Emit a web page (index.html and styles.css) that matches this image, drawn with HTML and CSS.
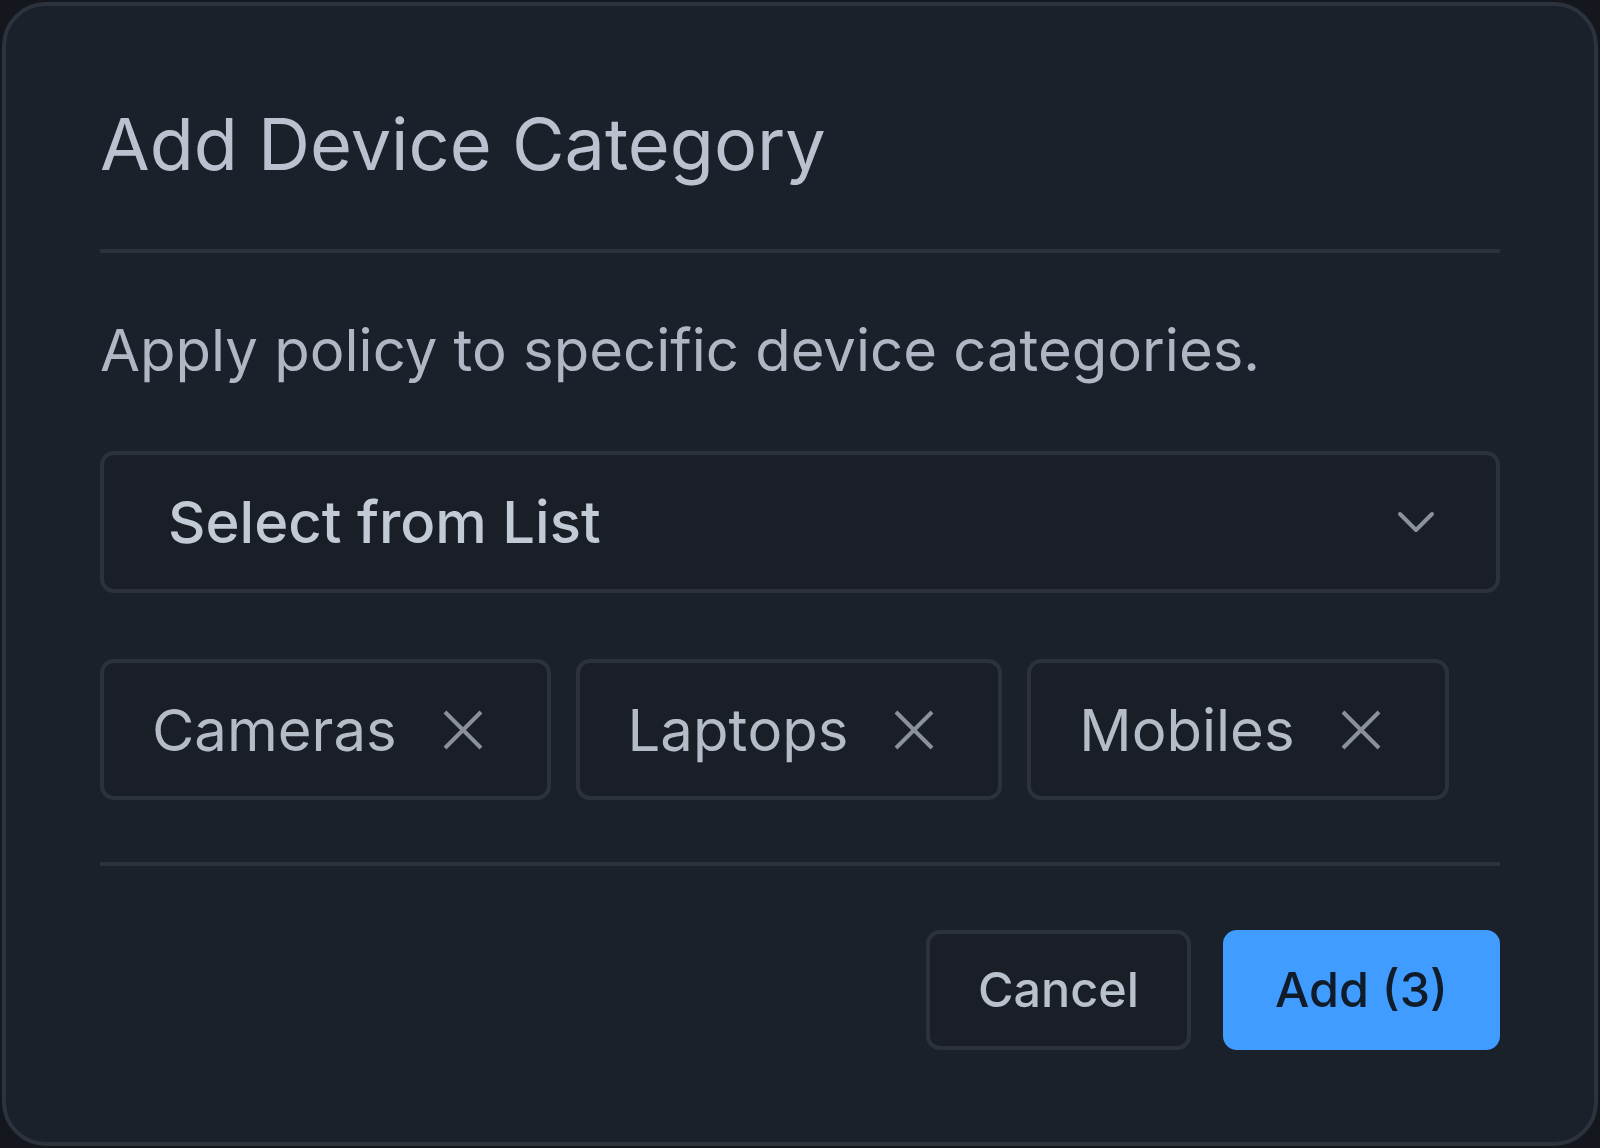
FILE: index.html
```html
<!DOCTYPE html>
<html lang="en">
<head>
<meta charset="utf-8">
<title>Add Device Category</title>
<link rel="stylesheet" href="styles.css">
</head>
<body>
<div class="modal">
  <header class="modal-header">
    <h1 class="modal-title">Add Device Category</h1>
  </header>
  <section class="modal-body">
    <p class="modal-desc">Apply policy to specific device categories.</p>
    <div class="select">
      <span class="select-label">Select from List</span>
      <svg class="chevron" width="40" height="24" viewBox="0 0 40 24" aria-hidden="true">
        <polyline points="4,4 20,20 36,4" fill="none" stroke="currentColor" stroke-width="4" stroke-linecap="round" stroke-linejoin="round"/>
      </svg>
    </div>
    <div class="tags">
      <div class="tag">
        <span class="tag-label">Cameras</span>
        <svg class="tag-x" width="40" height="40" viewBox="0 0 40 40" aria-hidden="true">
          <path d="M2 2 L38 38 M38 2 L2 38" stroke="currentColor" stroke-width="4" fill="none"/>
        </svg>
      </div>
      <div class="tag">
        <span class="tag-label">Laptops</span>
        <svg class="tag-x" width="40" height="40" viewBox="0 0 40 40" aria-hidden="true">
          <path d="M2 2 L38 38 M38 2 L2 38" stroke="currentColor" stroke-width="4" fill="none"/>
        </svg>
      </div>
      <div class="tag">
        <span class="tag-label">Mobiles</span>
        <svg class="tag-x" width="40" height="40" viewBox="0 0 40 40" aria-hidden="true">
          <path d="M2 2 L38 38 M38 2 L2 38" stroke="currentColor" stroke-width="4" fill="none"/>
        </svg>
      </div>
    </div>
  </section>
  <footer class="modal-footer">
    <button class="btn btn-secondary" type="button">Cancel</button>
    <button class="btn btn-primary" type="button">Add (3)</button>
  </footer>
</div>
</body>
</html>
```

FILE: styles.css
```css
* {
  box-sizing: border-box;
}

html, body {
  margin: 0;
  padding: 0;
}

body {
  width: 1600px;
  height: 1148px;
  background: #14181e;
  font-family: Inter, "Noto Sans", "Liberation Sans", sans-serif;
  padding: 2px;
  overflow: hidden;
}

.modal {
  width: 1596px;
  height: 1144px;
  background: #1b212a;
  border: 4px solid #2c333d;
  border-radius: 44px;
  padding: 94px 94px 92px;
  display: flex;
  flex-direction: column;
}

.modal-header {
  padding-bottom: 61px;
  border-bottom: 4px solid #2b323c;
}

.modal-title {
  margin: 0;
  font-size: 72px;
  line-height: 88px;
  font-weight: 400;
  color: #b9c2ce;
}

.modal-body {
  padding-top: 57px;
  padding-bottom: 62px;
  border-bottom: 4px solid #2b323c;
}

.modal-desc {
  margin: 0;
  font-size: 58px;
  line-height: 80px;
  color: #aeb7c3;
}

.select {
  margin-top: 61px;
  height: 142px;
  border: 4px solid #2b323c;
  border-radius: 14px;
  background: #1a1f27;
  padding: 0 60px 0 64px;
  display: flex;
  align-items: center;
  justify-content: space-between;
}

.select-label {
  font-size: 58px;
  line-height: 80px;
  font-weight: 500;
  color: #c2cad6;
}

.chevron {
  color: #8a919b;
  display: block;
}

.tags {
  margin-top: 66px;
  display: flex;
  gap: 25px;
}

.tag {
  height: 141px;
  border: 4px solid #2b323c;
  border-radius: 14px;
  background: #1a1f27;
  padding: 0 64px 0 48px;
  display: flex;
  align-items: center;
}

.tag-label {
  font-size: 58px;
  line-height: 80px;
  color: #b4bcc8;
  font-kerning: none;
}

.tag-x {
  display: block;
  margin-left: 46px;
  color: #8a919b;
}

.modal-footer {
  margin-top: 64px;
  display: flex;
  justify-content: flex-end;
  gap: 32px;
}

.btn {
  height: 120px;
  border-radius: 14px;
  padding: 0 48px;
  font-family: Inter, "Noto Sans", "Liberation Sans", sans-serif;
  font-size: 48.5px;
  line-height: 64px;
  font-weight: 500;
  cursor: pointer;
}

.btn-secondary {
  border: 4px solid #2b323c;
  background: #1a1f27;
  color: #b9c1cc;
}

.btn-primary {
  border: 4px solid #409cff;
  background: #409cff;
  color: #111c2a;
}
```
